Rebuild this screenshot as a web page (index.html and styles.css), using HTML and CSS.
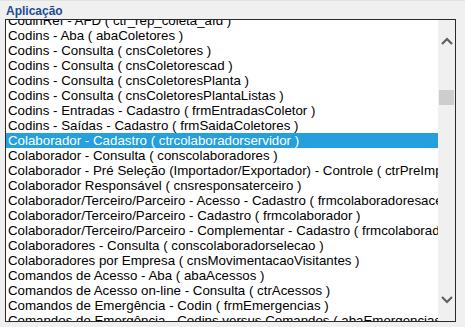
FILE: index.html
```html
<!DOCTYPE html>
<html lang="pt">
<head>
<meta charset="utf-8">
<title>Aplicação</title>
<link rel="stylesheet" href="styles.css">
</head>
<body>
<div class="field">
  <div class="label">Aplicação</div>
  <div class="listbox">
    <div class="viewport">
      <ul class="items">
        <li>CodinRef - AFD ( ctr_rep_coleta_afd )</li>
        <li>Codins - Aba ( abaColetores )</li>
        <li>Codins - Consulta ( cnsColetores )</li>
        <li>Codins - Consulta ( cnsColetorescad )</li>
        <li>Codins - Consulta ( cnsColetoresPlanta )</li>
        <li>Codins - Consulta ( cnsColetoresPlantaListas )</li>
        <li>Codins - Entradas - Cadastro ( frmEntradasColetor )</li>
        <li>Codins - Saídas - Cadastro ( frmSaidaColetores )</li>
        <li class="selected">Colaborador - Cadastro ( ctrcolaboradorservidor )</li>
        <li>Colaborador - Consulta ( conscolaboradores )</li>
        <li>Colaborador - Pré Seleção (Importador/Exportador) - Controle ( ctrPreImportacao )</li>
        <li>Colaborador Responsável ( cnsresponsaterceiro )</li>
        <li>Colaborador/Terceiro/Parceiro - Acesso - Cadastro ( frmcolaboradoresacesso )</li>
        <li>Colaborador/Terceiro/Parceiro - Cadastro ( frmcolaborador )</li>
        <li>Colaborador/Terceiro/Parceiro - Complementar - Cadastro ( frmcolaboradorcomplementar )</li>
        <li>Colaboradores - Consulta ( conscolaboradorselecao )</li>
        <li>Colaboradores por Empresa ( cnsMovimentacaoVisitantes )</li>
        <li>Comandos de Acesso - Aba ( abaAcessos )</li>
        <li>Comandos de Acesso on-line - Consulta ( ctrAcessos )</li>
        <li>Comandos de Emergência - Codin ( frmEmergencias )</li>
        <li>Comandos de Emergência - Codins versus Comandos ( abaEmergencias )</li>
      </ul>
    </div>
    <div class="scrollbar">
      <div class="btn">
        <svg width="12" height="8" viewBox="0 0 12 8"><path d="M1 7 L6 2 L11 7" fill="none" stroke="#606060" stroke-width="2.2"/></svg>
      </div>
      <div class="track"><div class="thumb"></div></div>
      <div class="btn">
        <svg width="12" height="8" viewBox="0 0 12 8"><path d="M1 1 L6 6 L11 1" fill="none" stroke="#606060" stroke-width="2.2"/></svg>
      </div>
    </div>
  </div>
</div>
</body>
</html>
```
FILE: styles.css
```css
html, body {
  margin: 0;
  padding: 0;
  background: #f0f0f0;
}
body {
  width: 465px;
  height: 327px;
  overflow: hidden;
  border-top: 1px solid #e2e2e2;
  box-sizing: border-box;
}
.field {
  padding-left: 5px;
}
.label {
  font-family: "Liberation Sans", Arial, sans-serif;
  font-weight: bold;
  font-size: 12px;
  line-height: 20px;
  height: 18px;
  color: #1c4c94;
  padding-left: 1px;
}
.listbox {
  width: 449px;
  height: 301px;
  border: 1px solid #2b2b2b;
  background: #fff;
  display: flex;
}
.viewport {
  flex: 1;
  overflow: hidden;
}
.items {
  list-style: none;
  margin: -7px 0 0 0;
  padding: 0;
  font-family: "Liberation Sans", Arial, sans-serif;
  font-size: 13.3px;
  line-height: 15px;
  color: #000;
}
.items li {
  height: 15px;
  padding-left: 2px;
  white-space: nowrap;
}
.items li.selected {
  background: #24a0dc;
  color: #fff;
}
.scrollbar {
  width: 17px;
  background: #f0f0f0;
  display: flex;
  flex-direction: column;
}
.btn {
  height: 42px;
  display: flex;
  align-items: center;
  justify-content: center;
}
.track {
  flex: 1;
  padding-top: 28px;
}
.thumb {
  width: 15px;
  height: 15px;
  margin-left: 1px;
  background: #cdcdcd;
}
```
